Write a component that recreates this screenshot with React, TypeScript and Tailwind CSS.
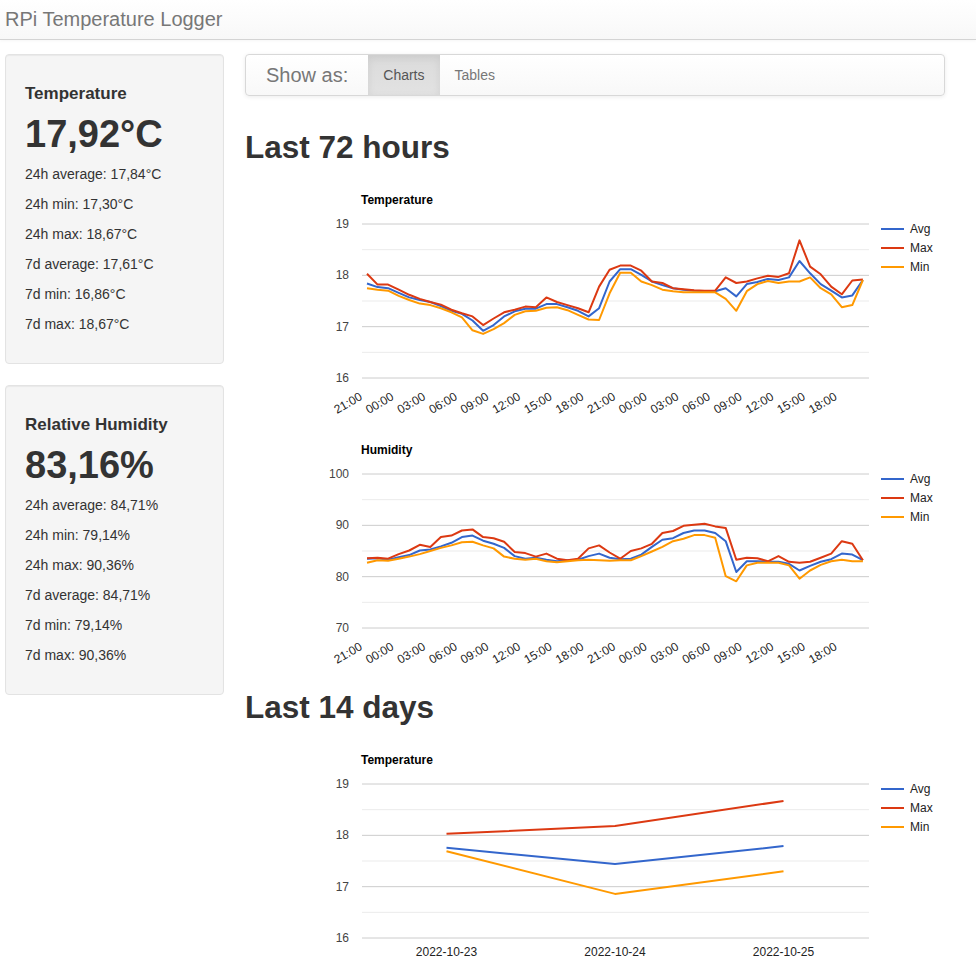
import React from "react";

const BLUE = "#3366cc";
const RED = "#dc3912";
const ORANGE = "#ff9900";

type Series = { name: string; color: string; values: number[] };

const tempAvg = [17.84, 17.77, 17.75, 17.66, 17.57, 17.52, 17.48, 17.4, 17.31, 17.25, 17.12, 16.92, 17.03, 17.2, 17.3, 17.35, 17.35, 17.44, 17.44, 17.38, 17.31, 17.2, 17.36, 17.88, 18.12, 18.12, 18.01, 17.88, 17.81, 17.75, 17.72, 17.7, 17.69, 17.69, 17.75, 17.59, 17.83, 17.87, 17.93, 17.91, 17.96, 18.28, 18.04, 17.83, 17.7, 17.57, 17.61, 17.91];
const tempMax = [18.03, 17.82, 17.82, 17.72, 17.62, 17.54, 17.48, 17.43, 17.33, 17.26, 17.2, 17.03, 17.16, 17.28, 17.33, 17.39, 17.38, 17.57, 17.48, 17.42, 17.36, 17.28, 17.78, 18.11, 18.19, 18.19, 18.09, 17.88, 17.85, 17.75, 17.73, 17.71, 17.7, 17.7, 17.96, 17.85, 17.88, 17.94, 17.99, 17.97, 18.04, 18.68, 18.17, 18.02, 17.78, 17.63, 17.9, 17.92];
const tempMin = [17.75, 17.72, 17.7, 17.6, 17.52, 17.45, 17.42, 17.36, 17.28, 17.18, 16.93, 16.86, 16.95, 17.07, 17.23, 17.3, 17.31, 17.37, 17.38, 17.32, 17.23, 17.14, 17.13, 17.65, 18.05, 18.05, 17.88, 17.81, 17.72, 17.69, 17.67, 17.67, 17.67, 17.67, 17.54, 17.31, 17.69, 17.83, 17.89, 17.85, 17.88, 17.88, 17.96, 17.75, 17.63, 17.38, 17.42, 17.91];

const humAvg = [83.5, 83.6, 83.3, 83.8, 84.2, 85.1, 85.3, 85.9, 86.6, 87.7, 88.0, 87.0, 86.4, 85.6, 84.0, 83.5, 83.7, 83.3, 83.0, 83.2, 83.3, 84.0, 84.5, 83.7, 83.4, 83.5, 84.3, 85.8, 87.2, 87.5, 88.5, 89.0, 89.0, 88.5, 86.9, 80.9, 83.0, 83.0, 82.9, 82.9, 82.5, 81.2, 82.1, 82.9, 83.4, 84.5, 84.3, 83.2];
const humMax = [83.6, 83.7, 83.5, 84.4, 85.1, 86.2, 85.8, 87.7, 88.0, 89.0, 89.2, 87.7, 87.5, 86.8, 84.8, 84.6, 83.9, 84.5, 83.5, 83.2, 83.5, 85.5, 86.1, 84.7, 83.5, 85.0, 85.5, 86.4, 88.5, 88.9, 89.9, 90.1, 90.3, 89.8, 89.5, 83.3, 83.7, 83.6, 83.0, 84.0, 82.9, 82.7, 82.9, 83.7, 84.5, 86.9, 86.4, 83.2];
const humMin = [82.7, 83.2, 83.1, 83.5, 83.9, 84.4, 85.0, 85.6, 86.1, 86.7, 86.8, 86.1, 85.5, 83.9, 83.5, 83.3, 83.5, 83.0, 82.8, 83.0, 83.2, 83.3, 83.2, 83.1, 83.2, 83.2, 84.0, 84.9, 85.8, 86.9, 87.4, 88.1, 88.1, 87.6, 80.1, 79.1, 82.2, 82.7, 82.7, 82.7, 82.2, 79.6, 81.2, 82.3, 83.0, 83.3, 83.0, 83.0];

const hours = ["21:00", "00:00", "03:00", "06:00", "09:00", "12:00", "15:00", "18:00"];

// plot area inside each 700px wide chart
const LEFT = 117;
const RIGHT = 624;
const TOP = 49;
const BOTTOM = 203;

function LineChart({
  title,
  min,
  max,
  step,
  series,
  height = 250,
  mode,
  categories = [],
}: {
  title: string;
  min: number;
  max: number;
  step: number;
  series: Series[];
  height?: number;
  mode: "hourly" | "daily";
  categories?: string[];
}) {
  const y = (v: number) => BOTTOM - ((v - min) / (max - min)) * (BOTTOM - TOP);
  const x = (i: number) => (mode === "hourly" ? 122 + i * 10.55 : 201.5 + i * 168.5);

  const majors: number[] = [];
  for (let v = min; v <= max + 0.001; v += step) majors.push(v);
  const minors = majors.slice(0, -1).map((v) => v + step / 2);

  return (
    <svg width={700} height={height} className="block" style={{ fontFamily: '"Liberation Sans", Arial, sans-serif' }}>
      <text x={116} y={29} fontSize={12} fontWeight="bold" fill="#000">
        {title}
      </text>

      {minors.map((v) => (
        <line key={"m" + v} x1={LEFT} x2={RIGHT} y1={y(v)} y2={y(v)} stroke="#ebebeb" strokeWidth={1} />
      ))}
      {majors.map((v) => (
        <g key={"g" + v}>
          <line x1={LEFT} x2={RIGHT} y1={y(v)} y2={y(v)} stroke="#cccccc" strokeWidth={1} />
          <text x={104} y={y(v) + 4} fontSize={12} textAnchor="end" fill="#444">
            {v}
          </text>
        </g>
      ))}

      {series.map((s) => (
        <path
          key={s.name}
          d={s.values.map((v, i) => `${i ? "L" : "M"}${x(i).toFixed(1)},${y(v).toFixed(1)}`).join(" ")}
          fill="none"
          stroke={s.color}
          strokeWidth={2}
          strokeLinejoin="round"
        />
      ))}

      {mode === "hourly"
        ? Array.from({ length: 16 }, (_, k) => {
            const lx = x(k * 3) - 4;
            const ly = BOTTOM + 21;
            return (
              <text key={k} x={lx} y={ly} fontSize={12} textAnchor="end" fill="#222" transform={`rotate(-30 ${lx} ${ly})`}>
                {hours[k % 8]}
              </text>
            );
          })
        : categories.map((c, i) => (
            <text key={c} x={x(i)} y={BOTTOM + 18} fontSize={12} textAnchor="middle" fill="#222">
              {c}
            </text>
          ))}

      {series.map((s, i) => (
        <g key={"l" + s.name}>
          <line x1={636} x2={659} y1={54 + i * 19} y2={54 + i * 19} stroke={s.color} strokeWidth={2} />
          <text x={665} y={58 + i * 19} fontSize={12} fill="#222">
            {s.name}
          </text>
        </g>
      ))}
    </svg>
  );
}

function StatWell({ title, value, stats }: { title: string; value: string; stats: string[] }) {
  return (
    <div className="rounded-[4px] border border-[#e3e3e3] bg-[#f5f5f5] p-[19px] pb-[19px] shadow-[inset_0_1px_1px_rgba(0,0,0,0.05)]">
      <h4 className="mt-[10px] text-[17px] font-bold leading-[20px] text-[#333]">{title}</h4>
      <div className="mt-[9px] text-[38px] font-bold leading-[42px] text-[#333]">{value}</div>
      <div className="mt-[9px]">
        {stats.map((s) => (
          <p key={s} className="mb-[10px] text-[14px] leading-[20px] text-[#333]">
            {s}
          </p>
        ))}
      </div>
    </div>
  );
}

export default function App() {
  return (
    <div className="min-h-[965px] bg-white font-['Liberation_Sans',Arial,sans-serif] text-[#333]">
      <header className="h-[40px] border-b border-[#d4d4d4] bg-linear-to-b from-white to-[#f8f8f8] px-[5px] shadow-[0_1px_3px_rgba(0,0,0,0.04)]">
        <span className="text-[20px] leading-[39px] text-[#777]">RPi Temperature Logger</span>
      </header>

      <div className="flex">
        <aside className="ml-[5px] mt-[14px] flex w-[219px] flex-col gap-[21px]">
          <StatWell
            title="Temperature"
            value="17,92°C"
            stats={[
              "24h average: 17,84°C",
              "24h min: 17,30°C",
              "24h max: 18,67°C",
              "7d average: 17,61°C",
              "7d min: 16,86°C",
              "7d max: 18,67°C",
            ]}
          />
          <StatWell
            title="Relative Humidity"
            value="83,16%"
            stats={[
              "24h average: 84,71%",
              "24h min: 79,14%",
              "24h max: 90,36%",
              "7d average: 84,71%",
              "7d min: 79,14%",
              "7d max: 90,36%",
            ]}
          />
        </aside>

        <main className="ml-[21px] mt-[14px] w-[700px]">
          <nav className="flex h-[42px] items-stretch rounded-[4px] border border-[#d8d8d8] bg-linear-to-b from-white to-[#f8f8f8] shadow-[0_1px_4px_rgba(0,0,0,0.08)]">
            <span className="flex items-center pl-[20px] pr-[20px] text-[20px] text-[#777]">Show as:</span>
            <span className="flex items-center bg-linear-to-b from-[#dbdbdb] to-[#e2e2e2] px-[15px] text-[14px] text-[#555] shadow-[inset_0_3px_9px_rgba(0,0,0,0.075)]">
              Charts
            </span>
            <span className="flex items-center px-[15px] text-[14px] text-[#777]">Tables</span>
          </nav>

          <h2 className="mb-[11px] mt-[34px] text-[31.5px] font-bold leading-[34px] text-[#333]">Last 72 hours</h2>
          <LineChart
            title="Temperature"
            min={16}
            max={19}
            step={1}
            mode="hourly"
            series={[
              { name: "Avg", color: BLUE, values: tempAvg },
              { name: "Max", color: RED, values: tempMax },
              { name: "Min", color: ORANGE, values: tempMin },
            ]}
          />
          <LineChart
            title="Humidity"
            min={70}
            max={100}
            step={10}
            mode="hourly"
            series={[
              { name: "Avg", color: BLUE, values: humAvg },
              { name: "Max", color: RED, values: humMax },
              { name: "Min", color: ORANGE, values: humMin },
            ]}
          />

          <h2 className="mb-[11px] mt-[15px] text-[31.5px] font-bold leading-[34px] text-[#333]">Last 14 days</h2>
          <LineChart
            title="Temperature"
            min={16}
            max={19}
            step={1}
            mode="daily"
            height={228}
            categories={["2022-10-23", "2022-10-24", "2022-10-25"]}
            series={[
              { name: "Avg", color: BLUE, values: [17.76, 17.44, 17.79] },
              { name: "Max", color: RED, values: [18.03, 18.18, 18.67] },
              { name: "Min", color: ORANGE, values: [17.69, 16.86, 17.3] },
            ]}
          />
        </main>
      </div>
    </div>
  );
}
